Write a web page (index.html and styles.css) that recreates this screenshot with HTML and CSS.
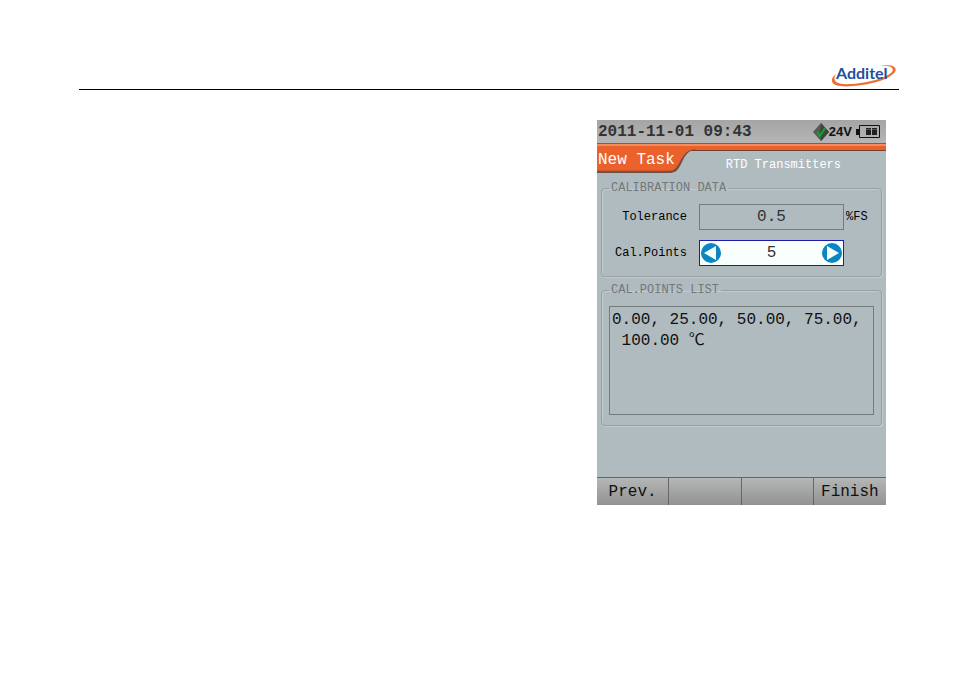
FILE: index.html
```
<!DOCTYPE html>
<html lang="en">

<head>
    <title>Additel - New Task</title>
    <meta charset="UTF-8">
    <meta name="viewport" content="width=device-width, initial-scale=1">
    <link rel="stylesheet" href="styles.css">
</head>

<body>
    <header class="page-header">
        <svg class="logo" viewBox="0 0 66 24" role="img" aria-label="Additel">
            <path d="M5 10C-1 14-1 21 9 22C24 24 57 18 64 8C67 2 60 0 46 2C58 1 64 3 61 8C54 16 25 21 12 20C3 19 2 15 5 10Z" fill="#ee7034"/>
            <text class="logo-text" x="5" y="15">Additel</text>
        </svg>
    </header>
    <main class="page-body">
        <form class="device">
            <div class="statusbar">
                <time class="clock">2011-11-01 09:43</time>
                <div class="power">
                    <svg class="check" viewBox="0 0 16 18" aria-hidden="true">
                        <path d="M8 0L16 9L8 18L0 9Z" fill="#555a55"/>
                        <path d="M8 0L16 9L8 18L7 12Z" fill="#3c4640"/>
                        <path d="M4 9L7 13L12 5" fill="none" stroke="#15a02a" stroke-width="2"/>
                    </svg>
                    <span>24V</span>
                    <svg class="battery" viewBox="0 0 24 13" aria-hidden="true">
                        <path d="M0 4h3v6H0z" fill="#111"/>
                        <path d="M3.500 0.500h20v12h-20z" fill="none" stroke="#111"/>
                        <path d="M10 3h5v7h-5zM16 3h5v7h-5z" fill="#222"/>
                        <path d="M10 4.500h5M16 4.500h5" stroke="#555"/>
                    </svg>
                </div>
            </div>
            <div class="stripe"></div>
            <div class="titlebar">
                <div class="tab">
                    <svg class="tab-shape" viewBox="0 0 100 25" aria-hidden="true">
                        <path d="M0 0H100C93 1 90 4 87 9L83 17C80 22 78 24 72 24H0Z" fill="#6d5047"/>
                        <path d="M0 0H98C91 1 88 4 85 9L81 16C78 21 76 22 71 22H0Z" fill="#eb612c"/>
                        <path d="M0 22H71C76 22 78 21 81 16" fill="none" stroke="#ba4a20"/>
                    </svg>
                    <h1 class="tab-name">New Task</h1>
                </div>
                <h2 class="subtitle">RTD Transmitters</h2>
            </div>
            <fieldset class="group">
                <legend>CALIBRATION DATA</legend>
                <div class="row">
                    <label for="tolerance">Tolerance</label>
                    <input class="field" id="tolerance" type="text" value="0.5">
                    <span class="unit">%FS</span>
                </div>
                <div class="row">
                    <label for="points">Cal.Points</label>
                    <div class="stepper">
                        <button class="step" type="button" aria-label="Fewer points">
                            <svg viewBox="0 0 20 20"><circle cx="10" cy="10" r="10" fill="#0c86c2"/><path d="M15 3V17L3 10Z" fill="#f8fffc"/></svg>
                        </button>
                        <input id="points" type="text" value="5">
                        <button class="step" type="button" aria-label="More points">
                            <svg viewBox="0 0 20 20"><circle cx="10" cy="10" r="10" fill="#0c86c2"/><path d="M5 3V17L17 10Z" fill="#f8fffc"/></svg>
                        </button>
                    </div>
                </div>
            </fieldset>
            <fieldset class="group">
                <legend>CAL.POINTS LIST</legend>
                <textarea class="list" aria-label="Cal. points list" readonly>0.00, 25.00, 50.00, 75.00,
 100.00 ℃</textarea>
            </fieldset>
            <div class="softkeys">
                <button type="button">Prev.</button>
                <button type="button" aria-label="F2"></button>
                <button type="button" aria-label="F3"></button>
                <button type="button">Finish</button>
            </div>
        </form>
    </main>
</body>

</html>
```

FILE: styles.css
```
* {
    box-sizing: border-box;
}

body {
    margin: 0;
    padding: 64px 55px 64px 79px;
    background: #fff;
    color: #111;
    font-family: "Liberation Mono", "Noto Sans CJK SC", monospace;
    font-size: 16px;
}

.page-header {
    display: flex;
    justify-content: flex-end;
    padding: 0 2px 1px 0;
    border-bottom: 1px solid #000;
}

.logo {
    width: 66px;
    height: 24px;
}

.logo-text {
    fill: #1f4f9d;
    font: bold 16px Lato, sans-serif;
}

.page-body {
    display: grid;
    grid-template-columns: 1fr minmax(289px, 35%);
    padding: 30px 13px 0 0;
}

.device {
    grid-column: 2;
    display: flex;
    flex-direction: column;
    min-height: 385px;
    background: #b0bbc0;
}

.statusbar {
    display: flex;
    align-items: center;
    justify-content: space-between;
    height: 23px;
    padding: 0 6px 0 1px;
    background: linear-gradient(#a5a5a5, #b5b5b5);
}

.clock {
    color: #333;
    font-weight: bold;
}

.power {
    display: flex;
    align-items: center;
    font: bold 13px "Liberation Sans", sans-serif;
}

.check {
    width: 16px;
    height: 18px;
}

.battery {
    width: 24px;
    height: 13px;
    margin-left: 4px;
}

.stripe {
    height: 8px;
    border-top: 1px solid #8c5a48;
    border-bottom: 1px solid #74432f;
    background: linear-gradient(#f28d60 40%, #eb612c 40%);
}

.titlebar {
    display: flex;
    justify-content: space-between;
    height: 29px;
    padding-right: 45px;
}

.tab {
    display: grid;
    width: 100px;
    height: 25px;
    margin-top: -2px;
}

.tab-shape,
.tab-name {
    grid-area: 1 / 1;
}

.tab-name {
    margin: 0;
    padding-left: 1px;
    color: #fff;
    font-size: 16px;
    font-weight: normal;
    line-height: 22px;
    z-index: 1;
}

.subtitle {
    margin: 0;
    color: #fff;
    font-size: 12px;
    font-weight: normal;
    line-height: 28px;
}

.group {
    min-width: 0;
    margin: 0 4px 5px;
    padding: 8px 7px 10px;
    border: 1px solid #989fa2;
    border-radius: 4px;
    box-shadow: inset 1px 1px #c3cacd, 1px 1px #c3cacd;
}

.group legend {
    padding: 0 2px;
    color: #72787a;
    font-size: 12px;
    line-height: 16px;
}

.row {
    display: grid;
    grid-template-columns: 90px minmax(0, 1fr) 30px;
    align-items: center;
    height: 26px;
    margin-bottom: 10px;
    font-size: 12px;
}

.row:last-child {
    margin-bottom: 0;
}

.row label {
    padding-right: 12px;
    color: #000;
    text-align: right;
}

.unit {
    padding-left: 2px;
    color: #000;
}

.field,
.stepper {
    width: 100%;
    height: 26px;
    border: 1px solid #747b7b;
    background: none;
}

.stepper {
    display: flex;
    align-items: center;
    justify-content: space-between;
    padding: 0 1px;
    border-color: #1c1cb0;
    background: #f8fffc;
}

.row input {
    min-width: 0;
    padding: 0;
    color: #333;
    font-family: inherit;
    font-size: 16px;
    text-align: center;
}

.stepper input {
    flex: 1;
    width: 100%;
    border: 0;
    background: none;
}

.step {
    flex: none;
    width: 20px;
    height: 20px;
    padding: 0;
    border: 0;
    background: none;
}

.step svg {
    display: block;
}

.list {
    display: block;
    width: 100%;
    height: 109px;
    padding: 3px 2px;
    border: 1px solid #747b7b;
    background: none;
    color: #111;
    font-family: inherit;
    font-size: 16px;
    line-height: 21px;
    overflow: hidden;
    resize: none;
}

.softkeys {
    display: grid;
    grid-template-columns: repeat(4, 1fr);
    height: 28px;
    margin-top: auto;
    border-top: 1px solid #666;
}

.softkeys button {
    padding: 0;
    border: 0;
    border-right: 1px solid #666;
    background: linear-gradient(#b5b6b6, #929292);
    color: #111;
    font-family: inherit;
    font-size: 16px;
}

.softkeys button:last-child {
    border-right: 0;
}
```
